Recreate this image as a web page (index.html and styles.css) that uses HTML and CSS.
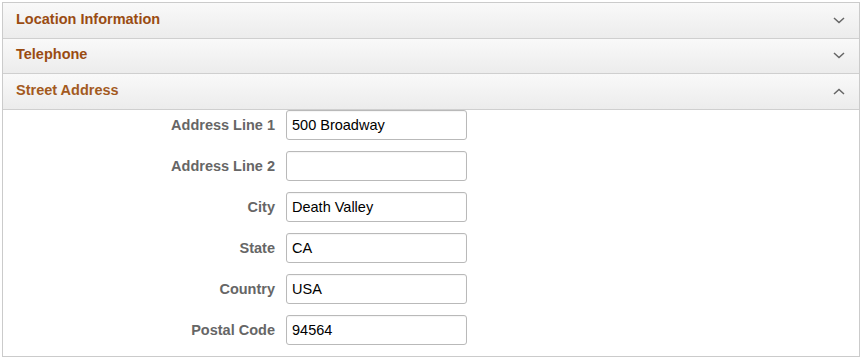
FILE: index.html
```html
<!DOCTYPE html>
<html lang="en">
<head>
<meta charset="utf-8">
<title>Address</title>
<link rel="stylesheet" href="styles.css">
</head>
<body>
<div class="panel">
  <div class="hdr">
    <span class="hdr-title">Location Information</span>
    <svg class="chev" width="12" height="7" viewBox="0 0 12 7"><path d="M1 1 L6 5.5 L11 1" fill="none" stroke="#666" stroke-width="1.5"/></svg>
  </div>
  <div class="hdr">
    <span class="hdr-title">Telephone</span>
    <svg class="chev" width="12" height="7" viewBox="0 0 12 7"><path d="M1 1 L6 5.5 L11 1" fill="none" stroke="#666" stroke-width="1.5"/></svg>
  </div>
  <div class="hdr">
    <span class="hdr-title">Street Address</span>
    <svg class="chev" width="12" height="7" viewBox="0 0 12 7"><path d="M1 6 L6 1.5 L11 6" fill="none" stroke="#666" stroke-width="1.5"/></svg>
  </div>
  <div class="body">
    <div class="row"><label class="lbl">Address Line 1</label><div class="inp">500 Broadway</div></div>
    <div class="row"><label class="lbl">Address Line 2</label><div class="inp"></div></div>
    <div class="row"><label class="lbl">City</label><div class="inp">Death Valley</div></div>
    <div class="row"><label class="lbl">State</label><div class="inp">CA</div></div>
    <div class="row"><label class="lbl">Country</label><div class="inp">USA</div></div>
    <div class="row"><label class="lbl">Postal Code</label><div class="inp">94564</div></div>
  </div>
</div>
</body>
</html>
```
FILE: styles.css
```css
html, body {
  margin: 0;
  padding: 0;
  background: #fff;
}
body {
  padding: 2px 3px 0 2px;
  font-family: "Liberation Sans", Arial, sans-serif;
}
.panel {
  width: 858px;
  box-sizing: border-box;
  border: 1px solid #cbcbcb;
}
.hdr {
  height: 31.67px;
  border-bottom: 1px solid #cfcfcf;
  background: linear-gradient(#f9f9f9, #ececec);
  display: flex;
  align-items: center;
  justify-content: space-between;
  padding: 0 14px 3px 13px;
  box-sizing: content-box;
}
.hdr-title {
  font-size: 14.5px;
  font-weight: bold;
  color: #9a4c12;
}
.hdr:nth-child(3) .hdr-title {
  color: #a35a1e;
}
.chev {
  display: block;
  margin-top: 3px;
}
.body {
  padding: 0 0 11px 0;
  display: flex;
  flex-direction: column;
  gap: 11px;
}
.row {
  display: grid;
  grid-template-columns: 272px 181px;
  column-gap: 11px;
  align-items: center;
}
.lbl {
  text-align: right;
  font-size: 14.5px;
  font-weight: bold;
  color: #666;
}
.inp {
  height: 30px;
  box-sizing: border-box;
  border: 1px solid #b9b9b9;
  border-radius: 3px;
  padding: 0 5px;
  font-size: 14.5px;
  line-height: 28px;
  color: #000;
  box-shadow: inset 0 1px 1px rgba(0,0,0,0.04);
}
```
